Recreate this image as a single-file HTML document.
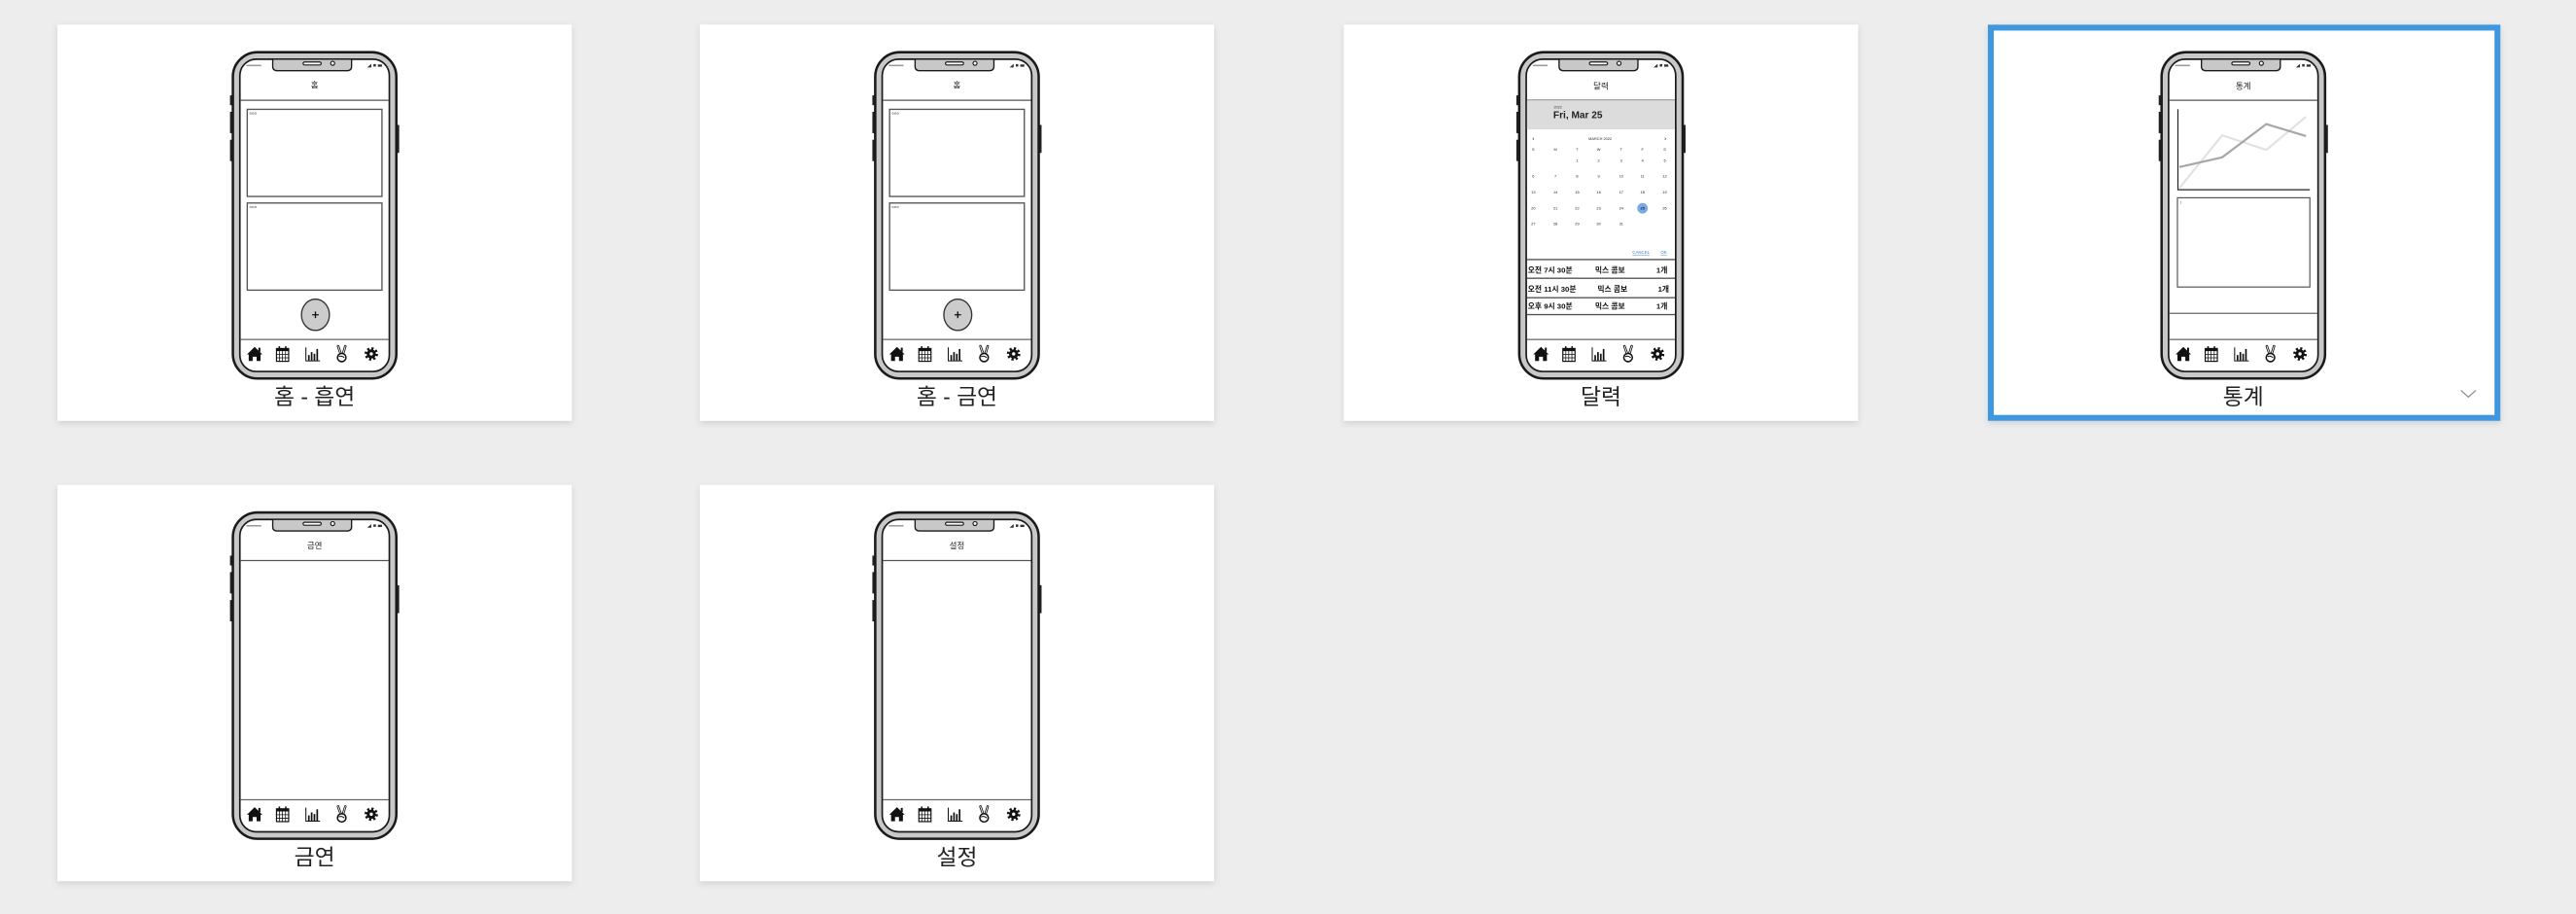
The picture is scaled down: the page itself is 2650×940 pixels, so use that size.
<!DOCTYPE html>
<html><head><meta charset="utf-8"><style>
html,body{margin:0;padding:0;background:#ededed;width:2650px;height:940px;overflow:hidden}
svg{display:block}
text{font-family:"Liberation Sans","Noto Sans CJK KR",sans-serif}
</style></head><body>
<svg width="2650" height="940" viewBox="0 0 1568 556" preserveAspectRatio="none" xmlns="http://www.w3.org/2000/svg">
<defs>
<filter id="sh" x="-5%" y="-5%" width="110%" height="115%"><feDropShadow dx="0" dy="1.5" stdDeviation="2" flood-color="#000" flood-opacity="0.12"/></filter>
<symbol id="ph" viewBox="-2 0 105 200" width="105" height="200" overflow="visible">
<rect x="-1" y="27" width="1.6" height="6" fill="#222"/>
<rect x="-1" y="37" width="1.6" height="13" fill="#222"/>
<rect x="-1" y="54" width="1.6" height="13" fill="#222"/>
<rect x="100.4" y="45" width="1.6" height="17" fill="#222"/>
<rect x="0.75" y="0.75" width="99.5" height="198.5" rx="15" fill="#c8c8c8" stroke="#1a1a1a" stroke-width="1.5"/>
<rect x="5" y="5" width="91" height="190" rx="10" fill="#fff" stroke="#1a1a1a" stroke-width="1"/>
<path d="M25 5 L25 9.5 Q25 12 28 12 L70 12 Q73 12 73 9.5 L73 5 Z" fill="#c8c8c8" stroke="#1a1a1a" stroke-width="0.8"/>
<rect x="43.5" y="6.7" width="11" height="1.8" rx="0.9" fill="#fff" stroke="#1a1a1a" stroke-width="0.7"/>
<circle cx="61.5" cy="7.5" r="1.2" fill="#fff" stroke="#1a1a1a" stroke-width="0.7"/>
<path d="M82.5 10 L85 7.8 L85 10 Z" fill="#333"/>
<rect x="86.3" y="8" width="1.5" height="1.5" fill="#333"/>
<rect x="89" y="8.2" width="2.5" height="1.4" fill="#333"/>
<rect x="9" y="8.4" width="9" height="0.9" fill="#999"/>
<line x1="5.5" y1="30" x2="95.5" y2="30" stroke="#555" stroke-width="0.8"/>
<line x1="5.5" y1="175.5" x2="95.5" y2="175.5" stroke="#666" stroke-width="0.8"/>
<path d="M9.3 184.6 L14 180 L18.7 184.6 L17.6 184.6 L17.6 188.6 L15.2 188.6 L15.2 186 L12.8 186 L12.8 188.6 L10.4 188.6 L10.4 184.6 Z" fill="#111"/>
<rect x="16.3" y="180.5" width="1.2" height="2.5" fill="#111"/>
<rect x="27.3" y="181" width="7.4" height="7.8" fill="#fff" stroke="#111" stroke-width="0.7"/>
<rect x="27.3" y="181" width="7.4" height="1.6" fill="#111"/>
<rect x="28.6" y="179.6" width="0.9" height="2.2" fill="#111"/><rect x="32.5" y="179.6" width="0.9" height="2.2" fill="#111"/>
<path d="M29.1 182.6V188.8M30.9 182.6V188.8M32.8 182.6V188.8M27.3 184.6H34.7M27.3 186.7H34.7" stroke="#111" stroke-width="0.45"/>
<path d="M45.2 180.3 V188.5 H53.8" fill="none" stroke="#111" stroke-width="0.6"/>
<rect x="46.5" y="185" width="1" height="3.3" fill="#111"/><rect x="48.2" y="183.2" width="1" height="5.1" fill="#111"/><rect x="49.9" y="184.2" width="1" height="4.1" fill="#111"/><rect x="51.6" y="181.3" width="1" height="7" fill="#111"/>
<path d="M64.8 179.6 L66.4 184.2 M69.2 179.6 L67.8 184.2" stroke="#111" stroke-width="1.5" stroke-linecap="round"/>
<path d="M64.8 179.6 L66.4 184.2 M69.2 179.6 L67.8 184.2" stroke="#fff" stroke-width="0.5" stroke-linecap="round"/>
<ellipse cx="67" cy="186.5" rx="2.6" ry="2.5" fill="#fff" stroke="#111" stroke-width="0.9"/>
<path d="M65.2 186 Q67 185 68.6 186.6" fill="none" stroke="#111" stroke-width="0.6"/>
<circle cx="85" cy="184.3" r="3.3" fill="none" stroke="#111" stroke-width="1.6" stroke-dasharray="1.3 1.29"/>
<circle cx="85" cy="184.3" r="2.8" fill="#111"/>
<circle cx="85" cy="184.3" r="1" fill="#fff"/>
</symbol>
<symbol id="home" viewBox="0 0 101 200" width="101" height="200" overflow="visible">
<rect x="9.5" y="35.5" width="82" height="53" fill="#fff" stroke="#555" stroke-width="0.8"/>
<rect x="9.5" y="92.5" width="82" height="53" fill="#fff" stroke="#555" stroke-width="0.8"/>
<g fill="none" stroke="#777" stroke-width="0.3"><circle cx="11.5" cy="38" r="0.5"/><circle cx="13" cy="38" r="0.5"/><circle cx="14.5" cy="38" r="0.5"/><circle cx="11.5" cy="95" r="0.5"/><circle cx="13" cy="95" r="0.5"/><circle cx="14.5" cy="95" r="0.5"/></g>
<ellipse cx="51" cy="160.5" rx="8.5" ry="9.5" fill="#ccc" stroke="#333" stroke-width="0.8"/>
<path d="M49 160.5H53M51 158.5V162.5" stroke="#111" stroke-width="0.8"/>
</symbol>
</defs>

<g filter="url(#sh)" fill="#fff">
<rect x="35" y="15" width="313" height="241"/>
<rect x="426" y="15" width="313" height="241"/>
<rect x="818" y="15" width="313" height="241"/>
<rect x="1210" y="15" width="312" height="241"/>
<rect x="35" y="295" width="313" height="241"/>
<rect x="426" y="295" width="313" height="241"/>
</g>
<rect x="1211.8" y="16.8" width="308.4" height="237.4" fill="none" stroke="#3f97e0" stroke-width="3.6"/>
<path d="M1498 237.5 L1502.5 241.5 L1507 237.5" fill="none" stroke="#888" stroke-width="0.7"/>

<use href="#ph" x="139" y="31"/>
<use href="#home" x="141" y="31"/>
<text x="191.5" y="53.5" font-size="5" text-anchor="middle" fill="#222">홈</text>
<text x="191.5" y="246" font-size="13.5" text-anchor="middle" fill="#222">홈 - 흡연</text>

<use href="#ph" x="530" y="31"/>
<use href="#home" x="532" y="31"/>
<text x="582.5" y="53.5" font-size="5" text-anchor="middle" fill="#222">홈</text>
<text x="582.5" y="246" font-size="13.5" text-anchor="middle" fill="#222">홈 - 금연</text>

<use href="#ph" x="922" y="31"/>
<g transform="translate(924,31)">
<rect x="5.5" y="30" width="90" height="17.7" fill="#dcdcdc"/>
<text x="50.5" y="23" font-size="5" text-anchor="middle" fill="#222">달력</text>
<text x="21.8" y="35" font-size="2.2" fill="#333">2022</text>
<text x="21.5" y="41" font-size="6" font-weight="bold" fill="#222">Fri, Mar 25</text>
<g font-size="2.3" fill="#222" text-anchor="middle">
<text x="9.3" y="54.5" font-size="3.8">‹</text><text x="50" y="54.3">MARCH 2022</text><text x="89.7" y="54.5" font-size="3.8">›</text>
<text x="9.3" y="60.7">S</text><text x="22.8" y="60.7">M</text><text x="36" y="60.7">T</text><text x="49.1" y="60.7">W</text><text x="62.8" y="60.7">T</text><text x="75.8" y="60.7">F</text><text x="89.3" y="60.7">S</text>
<text x="36" y="67.6">1</text><text x="49.1" y="67.6">2</text><text x="62.8" y="67.6">3</text><text x="75.8" y="67.6">4</text><text x="89.3" y="67.6">5</text>
<text x="9.3" y="76.9">6</text><text x="22.8" y="76.9">7</text><text x="36" y="76.9">8</text><text x="49.1" y="76.9">9</text><text x="62.8" y="76.9">10</text><text x="75.8" y="76.9">11</text><text x="89.3" y="76.9">12</text>
<text x="9.3" y="86.7">13</text><text x="22.8" y="86.7">14</text><text x="36" y="86.7">15</text><text x="49.1" y="86.7">16</text><text x="62.8" y="86.7">17</text><text x="75.8" y="86.7">18</text><text x="89.3" y="86.7">19</text>
<circle cx="75.8" cy="95.7" r="3.2" fill="#7aa9e8"/>
<text x="9.3" y="96.4">20</text><text x="22.8" y="96.4">21</text><text x="36" y="96.4">22</text><text x="49.1" y="96.4">23</text><text x="62.8" y="96.4">24</text><text x="75.8" y="96.4" font-weight="bold">25</text><text x="89.3" y="96.4">26</text>
<text x="9.3" y="106">27</text><text x="22.8" y="106">28</text><text x="36" y="106">29</text><text x="49.1" y="106">30</text><text x="62.8" y="106">31</text>
</g>
<text x="74.9" y="123.5" font-size="2.6" text-anchor="middle" fill="#3b7dd8" text-decoration="underline">CANCEL</text>
<text x="88.7" y="123.5" font-size="2.6" text-anchor="middle" fill="#3b7dd8" text-decoration="underline">OK</text>
<g stroke="#555" stroke-width="0.8"><line x1="5.5" y1="126.9" x2="95.5" y2="126.9"/><line x1="5.5" y1="138.3" x2="95.5" y2="138.3"/><line x1="5.5" y1="150.1" x2="95.5" y2="150.1"/><line x1="5.5" y1="160.4" x2="95.5" y2="160.4"/></g>
<g font-size="4.6" fill="#111" font-weight="bold">
<text x="6" y="135">오전 7시 30분</text><text x="56" y="135" text-anchor="middle">믹스 콤보</text><text x="91" y="135" text-anchor="end">1개</text>
<text x="6" y="146.5">오전 11시 30분</text><text x="57.5" y="146.5" text-anchor="middle">믹스 콤보</text><text x="92" y="146.5" text-anchor="end">1개</text>
<text x="6" y="156.7">오후 9시 30분</text><text x="56" y="156.7" text-anchor="middle">믹스 콤보</text><text x="91" y="156.7" text-anchor="end">1개</text>
</g>
</g>
<text x="974.5" y="246" font-size="13.5" text-anchor="middle" fill="#222">달력</text>

<use href="#ph" x="1313" y="31"/>
<g transform="translate(1315,31)">
<text x="50.5" y="23" font-size="5" text-anchor="middle" fill="#222">통계</text>
<polyline points="11.6,83.4 37.6,51.3 64.5,60.2 88.7,40" fill="none" stroke="#e2e2e2" stroke-width="1.3"/>
<polyline points="11.6,70.6 37.6,64.7 64.5,44.5 88.7,51.8" fill="none" stroke="#a8a8a8" stroke-width="1.3"/>
<path d="M10.7 35.5 V84.4 H91" fill="none" stroke="#222" stroke-width="0.7"/>
<rect x="10.4" y="89.3" width="80.6" height="54.3" fill="none" stroke="#555" stroke-width="0.7"/>
<text x="12" y="93" font-size="2" fill="#555">1</text>
<line x1="5.5" y1="159.6" x2="95.5" y2="159.6" stroke="#666" stroke-width="0.7"/>
</g>
<text x="1365.5" y="246" font-size="13.5" text-anchor="middle" fill="#222">통계</text>

<use href="#ph" x="139" y="311"/>
<text x="191.5" y="333.5" font-size="5" text-anchor="middle" fill="#222">금연</text>
<text x="191.5" y="526" font-size="13.5" text-anchor="middle" fill="#222">금연</text>

<use href="#ph" x="530" y="311"/>
<text x="582.5" y="333.5" font-size="5" text-anchor="middle" fill="#222">설정</text>
<text x="582.5" y="526" font-size="13.5" text-anchor="middle" fill="#222">설정</text>
</svg>
</body></html>
